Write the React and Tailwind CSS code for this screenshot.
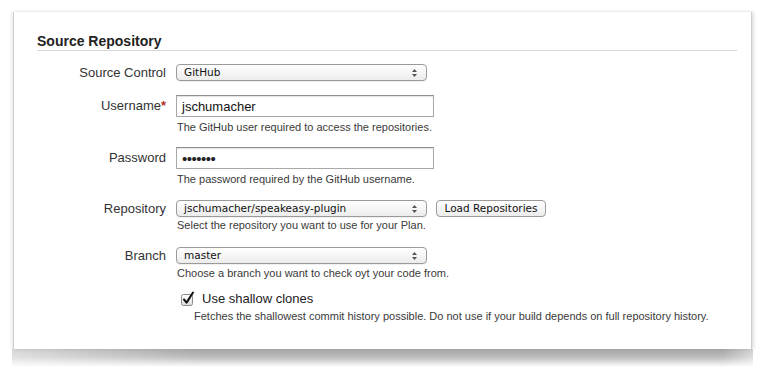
import { useState } from "react";

const ui = { fontFamily: '"Liberation Sans", Arial, sans-serif' };
const lucida = { fontFamily: '"DejaVu Sans", "Liberation Sans", sans-serif' };

function Arrows() {
  return (
    <svg width="7" height="10" viewBox="0 0 7 10" className="shrink-0">
      <path d="M3.5 1 L6 4 L1 4 Z" fill="#555" />
      <path d="M3.5 9 L6 6 L1 6 Z" fill="#555" />
    </svg>
  );
}

function MacSelect({ value }) {
  return (
    <div
      className="flex items-center justify-between w-[251px] h-[17px] pl-[7px] pr-[8px] rounded-[4px] border border-[#9a9a9a] bg-gradient-to-b from-white to-[#ececec] text-[10.5px] text-[#111] shadow-[0_1px_0_rgba(0,0,0,0.06)]"
      style={lucida}
    >
      <span className="leading-none">{value}</span>
      <Arrows />
    </div>
  );
}

function TextInput({ value, type }) {
  return (
    <div className="flex items-center w-[258px] h-[22px] px-[5px] border border-[#a8a8a8] border-t-[#8f8f8f] bg-white shadow-[inset_0_1px_1px_rgba(0,0,0,0.12)]">
      {type === "password" ? (
        <span className="text-[15px] tracking-[-0.5px] text-[#222] leading-none">•••••••</span>
      ) : (
        <span className="text-[13px] text-[#111] leading-none">{value}</span>
      )}
    </div>
  );
}

function Field({ label, required, children, help, helpGap, className }) {
  return (
    <div className={`flex ${className}`}>
      <div className="flex flex-col">
        <div className="flex items-center">
          <div className="w-[130px] text-right text-[13px] leading-[16px] text-[#333] pr-[1px]">
            {label}
            {required && <span className="text-[#b0302a] font-bold">*</span>}
          </div>
          <div className="ml-[9px] flex items-center gap-[9px]">{children}</div>
        </div>
        {help && (
          <div className={`ml-[140px] text-[11px] leading-[14px] text-[#3a3a3a] ${helpGap}`}>{help}</div>
        )}
      </div>
    </div>
  );
}

export default function App() {
  const [shallow, setShallow] = useState(true);

  return (
    <div className="w-[768px] h-[380px] bg-white overflow-hidden" style={ui}>
      <div className="ml-[13px] w-[739px] pt-[12px]">
        <div className="bg-white border-l border-r border-[#cdcdcd] shadow-[-2px_0_3px_rgba(0,0,0,0.08),2px_0_3px_rgba(0,0,0,0.12)] pl-[23px] pr-[14px] pt-[21px] h-[337px]">
          <h2 className="text-[14px] leading-[16px] font-bold text-[#222] pb-[1px] border-b border-[#d6d6d6]">
            Source Repository
          </h2>

          <Field label="Source Control" className="mt-[13px]">
            <MacSelect value="GitHub" />
          </Field>

          <Field
            label="Username"
            required
            className="mt-[14px]"
            help="The GitHub user required to access the repositories."
            helpGap="mt-[3px]"
          >
            <TextInput value="jschumacher" />
          </Field>

          <Field
            label="Password"
            className="mt-[13px]"
            help="The password required by the GitHub username."
            helpGap="mt-[3px]"
          >
            <TextInput type="password" />
          </Field>

          <Field
            label="Repository"
            className="mt-[14px]"
            help="Select the repository you want to use for your Plan."
            helpGap="mt-[1px]"
          >
            <MacSelect value="jschumacher/speakeasy-plugin" />
            <button
              className="w-[110px] h-[17px] rounded-[4px] border border-[#9a9a9a] bg-gradient-to-b from-white to-[#ececec] text-[10.5px] leading-none text-[#111]"
              style={lucida}
            >
              Load Repositories
            </button>
          </Field>

          <Field
            label="Branch"
            className="mt-[15px]"
            help="Choose a branch you want to check oyt your code from."
            helpGap="mt-[2px]"
          >
            <MacSelect value="master" />
          </Field>

          <div className="ml-[143px] mt-[11px]">
            <label className="flex items-center gap-[7px] cursor-pointer" onClick={() => setShallow(!shallow)}>
              <svg width="15" height="15" viewBox="0 0 15 15" className="shrink-0 -mt-[2px]">
                <defs>
                  <linearGradient id="cb" x1="0" y1="0" x2="0" y2="1">
                    <stop offset="0" stopColor="#ffffff" />
                    <stop offset="1" stopColor="#dcdcdc" />
                  </linearGradient>
                </defs>
                <rect x="1.5" y="3.5" width="11" height="11" rx="2" fill="url(#cb)" stroke="#8a8a8a" />
                {shallow && (
                  <path d="M4 8.5 L6.6 11.6 L13 1.5" fill="none" stroke="#111" strokeWidth="2" strokeLinecap="round" strokeLinejoin="round" />
                )}
              </svg>
              <span className="text-[13px] leading-[16px] text-[#222]">Use shallow clones</span>
            </label>
            <div className="ml-[14px] mt-[2px] text-[11px] leading-[14px] text-[#3a3a3a]">
              Fetches the shallowest commit history possible. Do not use if your build depends on full repository history.
            </div>
          </div>
        </div>
        <div className="h-[18px] -mx-[1px] bg-gradient-to-b from-[#a3a3a3] via-[#bdbdbd] via-45% to-white [mask-image:linear-gradient(to_right,rgba(0,0,0,0.45),black_25%,black_96%,rgba(0,0,0,0.5))]" />
      </div>
    </div>
  );
}
